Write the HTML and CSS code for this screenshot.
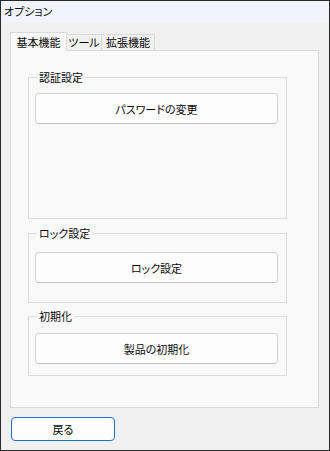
FILE: index.html
```html
<!DOCTYPE html>
<html lang="ja">
<head>
<meta charset="utf-8">
<title>オプション</title>
<link rel="stylesheet" href="styles.css">
</head>
<body>
<div class="window">
  <div class="titlebar">オプション</div>
  <div class="client">
    <div class="tabs">
      <div class="tab active t1">基本機能</div>
      <div class="tab t2">ツール</div>
      <div class="tab t3">拡張機能</div>
    </div>
    <div class="panel">
      <fieldset class="group g1">
        <legend>認証設定</legend>
        <button class="btn">パスワードの変更</button>
      </fieldset>
      <fieldset class="group g2">
        <legend>ロック設定</legend>
        <button class="btn">ロック設定</button>
      </fieldset>
      <fieldset class="group g3">
        <legend>初期化</legend>
        <button class="btn">製品の初期化</button>
      </fieldset>
    </div>
    <div class="footer">
      <button class="btn back">戻る</button>
    </div>
  </div>
</div>
</body>
</html>
```
FILE: styles.css
```css
* { box-sizing: border-box; }
html, body { margin: 0; padding: 0; background: #f0f0f0; }
body {
  font-family: "Noto Sans CJK JP", "Noto Sans", sans-serif;
  font-size: 11px;
  color: #0a0a0a;
  font-feature-settings: "palt";
}
.window {
  width: 330px;
  height: 451px;
  border: 1px solid #2a2a2a;
  background: #f0f0f0;
  display: flex;
  flex-direction: column;
}
.titlebar {
  height: 22px;
  line-height: 21px;
  background: #eef4f9;
  padding-left: 3px;
  flex: none;
}
.client {
  flex: 1;
  display: flex;
  flex-direction: column;
  padding: 9px 10px 0 9px;
}
.tabs {
  display: flex;
  align-items: flex-end;
  height: 18px;
}
.tab {
  height: 16px;
  line-height: 14px;
  text-align: center;
  border: 1px solid #dadada;
  border-bottom: none;
  background: #f0f0f0;
}
.tab + .tab { margin-left: -1px; }
.tab.active {
  height: 19px;
  margin-bottom: -1px;
  background: #f9f9f9;
  line-height: 18px;
  position: relative;
  z-index: 1;
}
.t1 { width: 57px; }
.t2 { width: 36px; }
.t3 { width: 54px; }
.panel {
  height: 358px;
  border: 1px solid #dadada;
  background: #f9f9f9;
  padding: 19px 0 0 17px;
  display: flex;
  flex-direction: column;
}
.group {
  margin: 0;
  width: 259px;
  border: 1px solid #dcdcdc;
  padding: 0 9px 0 6px;
  min-inline-size: 0;
}
.group legend {
  font-size: 11px;
  line-height: 14px;
  padding: 0 2px;
  margin-left: 2px;
}
.g1 { height: 149px; padding-top: 9px; }
.g2 { height: 77px; margin-top: 7px; padding-top: 12px; }
.g3 { height: 67px; margin-top: 6px; padding-top: 10px; }
.btn {
  display: block;
  width: 243px;
  height: 31px;
  margin: 0;
  font: inherit;
  color: #0a0a0a;
  background: #fdfdfd;
  border: 1px solid #d3d3d3;
  border-bottom-color: #c2c2c2;
  border-radius: 4px;
  padding: 0;
}
.footer {
  padding-top: 9px;
  padding-left: 1px;
}
.btn.back {
  width: 104px;
  height: 24px;
  border: 1px solid #1a73c8;
  background: #fdfdfd;
}
```
